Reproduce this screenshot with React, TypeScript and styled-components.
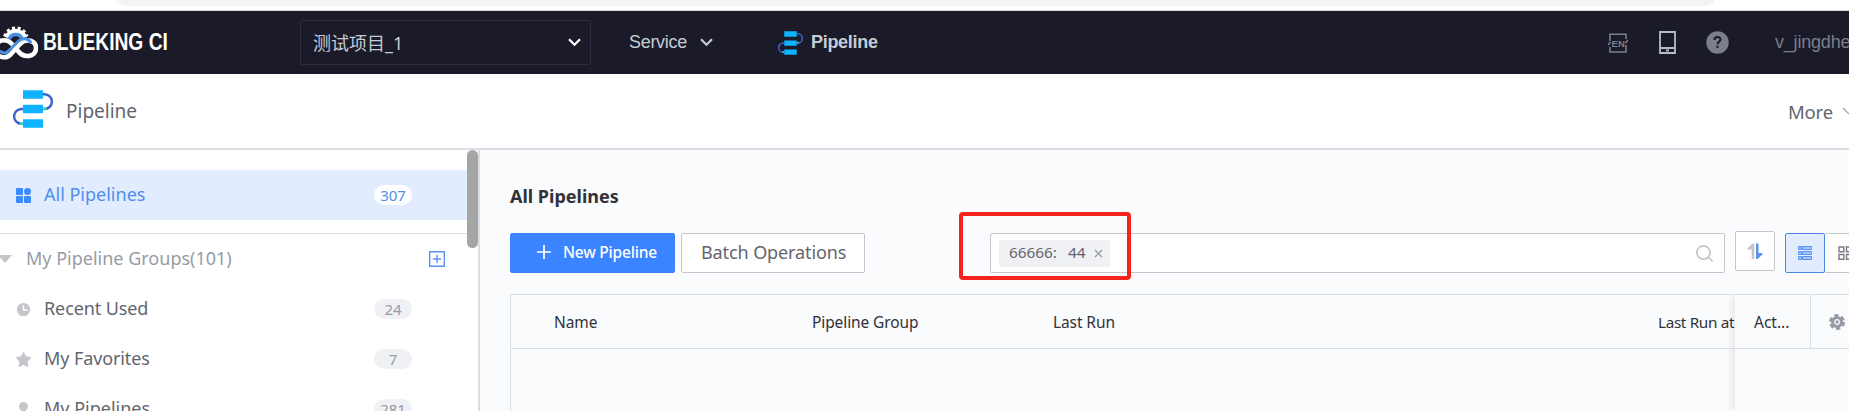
import React from "react";
import styled, { createGlobalStyle, css } from "styled-components";

const Global = createGlobalStyle`
  * { box-sizing: border-box; }
  html, body { margin: 0; padding: 0; overflow: hidden; }
  body { width: 1849px; height: 411px; background: #fff; font-family: "Noto Sans", "Noto Sans CJK SC", sans-serif; color: #63656e; }
  svg { display: block; flex: none; }
`;

const Page = styled.div`
  width: 1849px;
  height: 411px;
  overflow: hidden;
  display: flex;
  flex-direction: column;
`;

const BrowserEdge = styled.div`
  height: 11px;
  flex: none;
  border-bottom: 1px solid #d8dade;
  padding: 0 134px 0 116px;
`;

const AddressBar = styled.div`
  height: 6px;
  background: #f1f3f4;
  border-radius: 0 0 16px 16px / 0 0 6px 6px;
`;

const Text = styled.span<{ $size: number; $ls?: number; $color?: string; $bold?: boolean; $weight?: number; $arial?: boolean; $up?: number }>`
  white-space: nowrap;
  flex: none;
  font-size: ${(p) => p.$size}px;
  letter-spacing: ${(p) => p.$ls ?? 0}px;
  color: ${(p) => p.$color ?? "#63656e"};
  font-weight: ${(p) => p.$weight ?? (p.$bold ? 700 : 400)};
  margin-bottom: ${(p) => (p.$up ?? 0) * 2}px;
  ${(p) => p.$arial && css`font-family: "Liberation Sans", "Noto Sans CJK SC", sans-serif;`}
`;

const BrandName = styled.span`
  font: 700 23px "Liberation Sans", sans-serif;
  color: #fff;
  white-space: nowrap;
  transform: scaleX(0.835);
  transform-origin: left center;
`;

const Nav = styled.header`
  height: 63px;
  flex: none;
  background: #1b1a28;
  display: flex;
  align-items: center;
  overflow: hidden;
`;

const Brand = styled.div`
  width: 300px;
  flex: none;
  display: flex;
  align-items: center;
  gap: 5px;
`;

const ProjectSelect = styled.div`
  width: 291px;
  height: 45px;
  flex: none;
  border: 1px solid #2c2b40;
  border-radius: 2px;
  display: flex;
  align-items: center;
  justify-content: space-between;
  padding: 0 9px 0 12px;
`;

const NavService = styled.div`
  width: 187px;
  flex: none;
  padding-left: 38px;
  display: flex;
  align-items: center;
  gap: 13px;
`;

const NavCurrent = styled.div`
  flex: 1;
  display: flex;
  align-items: center;
  gap: 8px;
`;

const NavTools = styled.div`
  width: 241px;
  flex: none;
  display: flex;
  align-items: center;
`;

const ToolSlot = styled.div<{ $w: number }>`
  width: ${(p) => p.$w}px;
  flex: none;
`;

const SubHeader = styled.div`
  height: 76px;
  flex: none;
  border-bottom: 2px solid #dcdee5;
  display: flex;
  align-items: center;
  padding-left: 13px;
  overflow: hidden;
`;

const SubTitle = styled.div`
  flex: 1;
  display: flex;
  align-items: center;
  gap: 13px;
`;

const ServiceMark = styled.div`
  margin-bottom: 4px;
`;

const MoreMenu = styled.div`
  width: 61px;
  flex: none;
  display: flex;
  align-items: center;
  gap: 9px;
`;

const Body = styled.div`
  flex: 1;
  min-height: 0;
  display: flex;
`;

const Aside = styled.aside`
  width: 480px;
  flex: none;
  border-right: 2px solid #dcdee5;
  display: flex;
  background: #fff;
  overflow: hidden;
`;

const AsideList = styled.div`
  flex: 1;
  padding-top: 20px;
`;

const ScrollThumb = styled.div`
  width: 11px;
  height: 98px;
  flex: none;
  border-radius: 6px;
  background: #a5a5a5;
`;

const Item = styled.div<{ $active?: boolean }>`
  height: 50px;
  display: flex;
  align-items: center;
  padding: 0 55px 0 16px;
  background: ${(p) => (p.$active ? "#e1ecff" : "transparent")};
`;

const ItemIcon = styled.div`
  width: 28px;
  flex: none;
`;

const ItemName = styled.div`
  flex: 1;
  display: flex;
`;

const Badge = styled.div<{ $active?: boolean }>`
  width: 38px;
  height: 20px;
  border-radius: 10px;
  background: ${(p) => (p.$active ? "#fff" : "#f0f1f5")};
  display: flex;
  align-items: center;
  justify-content: center;
`;

const GroupRow = styled.div`
  margin-top: 13px;
  border-top: 1px solid #dcdee5;
  height: 51px;
  display: flex;
  align-items: center;
  justify-content: space-between;
  padding-right: 22px;
`;

const GroupLabel = styled.div`
  display: flex;
  align-items: center;
  gap: 14px;
`;

const Main = styled.main`
  flex: 1;
  min-width: 0;
  background: #fafbfd;
  padding: 30px 0 0 30px;
  display: flex;
  flex-direction: column;
`;

const Title = styled.div`
  height: 32px;
  flex: none;
  display: flex;
  align-items: center;
`;

const Toolbar = styled.div`
  margin-top: 21px;
  height: 40px;
  flex: none;
  display: flex;
`;

const Button = styled.div<{ $primary?: boolean; $w: number }>`
  width: ${(p) => p.$w}px;
  height: 40px;
  flex: none;
  border-radius: 2px;
  border: 1px solid ${(p) => (p.$primary ? "#3a84ff" : "#c4c6cc")};
  background: ${(p) => (p.$primary ? "#3a84ff" : "#fff")};
  display: flex;
  align-items: center;
  gap: 12px;
  padding-left: ${(p) => (p.$primary ? 26 : 19)}px;
  margin-right: 6px;
`;

const PlusMark = styled.div`
  margin-bottom: 3px;
`;

const Search = styled.div`
  position: relative;
  width: 735px;
  height: 40px;
  flex: none;
  margin-left: 119px;
  border: 1px solid #c4c6cc;
  border-radius: 2px;
  background: #fff;
  display: flex;
  align-items: center;
  justify-content: space-between;
  padding: 0 11px 0 8px;
`;

const Tag = styled.div`
  width: 111px;
  height: 27px;
  border-radius: 2px;
  background: #f0f1f5;
  display: flex;
  align-items: center;
  padding-left: 10px;
`;

const Highlight = styled.div`
  position: absolute;
  left: -32px;
  top: -22px;
  width: 172px;
  height: 68px;
  border: 4px solid #f5231b;
  border-radius: 4px;
`;

const IconButton = styled.div<{ $variant?: "sort" | "on" | "off" }>`
  width: 40px;
  height: 40px;
  flex: none;
  display: flex;
  align-items: center;
  justify-content: center;
  border: 1px solid ${(p) => (p.$variant === "on" ? "#4a86e0" : "#c4c6cc")};
  border-radius: ${(p) => (p.$variant === "off" ? 0 : 2)}px;
  background: ${(p) => (p.$variant === "on" ? "#e1ecff" : "#fff")};
  ${(p) => p.$variant === "sort" && css`margin: -2px 10px 0 10px;`}
  ${(p) => p.$variant === "off" && css`border-left: 0;`}
`;

const Table = styled.div`
  margin-top: 21px;
  flex: 1;
  border: 1px solid #dcdee5;
  border-width: 1px 0 0 1px;
  border-radius: 2px 0 0 0;
  display: flex;
  min-width: 0;
`;

const Scrollable = styled.div`
  flex: 1;
  min-width: 0;
  overflow: hidden;
`;

const HeadRow = styled.div`
  height: 54px;
  border-bottom: 1px solid #dcdee5;
  display: flex;
  align-items: center;
`;

const HeadCell = styled.div<{ $w: number; $pad?: number }>`
  width: ${(p) => p.$w}px;
  padding-left: ${(p) => p.$pad ?? 0}px;
  flex: none;
  display: flex;
`;

const FixedColumns = styled.div`
  width: 114px;
  flex: none;
  background: #fafbfd;
  box-shadow: 0 0 10px rgba(0, 0, 0, 0.14);
  clip-path: inset(0 0 0 -20px);
`;

const ActionCell = styled.div`
  width: 76px;
  height: 53px;
  flex: none;
  border-right: 1px solid #dcdee5;
  padding-left: 19px;
  display: flex;
  align-items: center;
`;

const SettingCell = styled.div`
  padding-left: 18px;
`;

const PipelineIcon = ({ w, h }: { w: number; h: number }) => (
  <svg width={w} height={h} viewBox="0 0 40 38" fill="none">
    <path d="M30 4.200h1.500a7.300 7.300 0 0 1 0 14.800H30M10 19H8.500a7.300 7.300 0 0 0 0 14.800H10" stroke="#3c62cf" strokeWidth="2.400" />
    <path d="M30 19l3.500-.6M10 33.800l-3-.6" stroke="#3adfc4" strokeWidth="2.400" />
    <path d="M10 .3h20v8.500H10zM10 14.800h20v8.500H10zM10 29.200h20v8.500H10z" fill="#0eb4ff" />
  </svg>
);

const Chevron = ({ color }: { color: string }) => (
  <svg width="13" height="9" viewBox="0 0 13 9" fill="none" stroke={color} strokeWidth="2.300">
    <path d="M1 1.300l5.500 5.400L12 1.300" />
  </svg>
);

const Logo = () => (
  <svg width="38" height="36" viewBox="0 0 38 36" fill="none">
    <path d="M6.500 12.500a9.800 9.800 0 0 1 18.500 0" stroke="#fff" strokeWidth="4.500" />
    <path d="M4.700 11.500a11.500 11.500 0 0 1 22.200 0" stroke="#fff" strokeWidth="3.200" strokeDasharray="3 2.600" />
    <path d="M9.500 14c1.500-6 11-6 12.500 0" stroke="#4a90e2" strokeWidth="3.600" />
    <path d="M-4 19C1 13.500 8 14.500 12 19l6 7c6 8 18 6 18-3 0-8-10-10-15.500-4.500L11 29c-4 5-11 4-15-1" stroke="#fff" strokeWidth="4.600" />
    <path d="M0 25.500c2.500 3.500 6.500 3 8.500.5L18.500 16c4-3.500 10-3 12.500 2" stroke="#4a90e2" strokeWidth="3" />
  </svg>
);

const EnLabel = styled.text`
  font: 700 9.500px "Liberation Sans", sans-serif;
  fill: #7b7e8c;
`;

const navGray = "#7b7e8c";

const App = () => (
  <Page>
    <Global />
    <BrowserEdge>
      <AddressBar />
    </BrowserEdge>
    <Nav>
      <Brand>
        <Logo />
        <BrandName>BLUEKING CI</BrandName>
      </Brand>
      <ProjectSelect>
        <Text $size={18} $color="#c3cdd7" $up={1}>测试项目_1</Text>
        <Chevron color="#fff" />
      </ProjectSelect>
      <NavService>
        <Text $size={18} $ls={-0.3} $color="#c3cdd7" $arial>Service</Text>
        <Chevron color="#c3cdd7" />
      </NavService>
      <NavCurrent>
        <PipelineIcon w={25} h={24} />
        <Text $size={18} $ls={-0.3} $color="#c3cdd7" $bold $arial>Pipeline</Text>
      </NavCurrent>
      <NavTools>
        <ToolSlot $w={51}>
          <svg width="20" height="20" viewBox="0 0 20 20" fill="none" stroke={navGray} strokeWidth="1.600">
            <path d="M2 8V1.200h16V6M18 12v7H2v-5M0 12l2.500-3M20 7l-2.500 3" />
            <EnLabel x="3.600" y="13.500" stroke="none">EN</EnLabel>
          </svg>
        </ToolSlot>
        <ToolSlot $w={47}>
          <svg width="17" height="23" viewBox="0 0 17 23" fill="none" stroke="#b4bdc9" strokeWidth="1.800">
            <path d="M1 1h15v21H1zM1 17h15M7 19.500h3" />
          </svg>
        </ToolSlot>
        <ToolSlot $w={69}>
          <svg width="23" height="23" viewBox="0 0 23 23" fill="none">
            <circle cx="11.500" cy="11.500" r="11.200" fill={navGray} />
            <path d="M8.500 9c0-4 6-4 6-.5 0 2.200-3 2-3 4.700M11.500 14.800v2.200" stroke="#1b1a28" strokeWidth="2" />
          </svg>
        </ToolSlot>
        <Text $size={18} $ls={-0.2} $color={navGray} $arial>v_jingdhe</Text>
      </NavTools>
    </Nav>
    <SubHeader>
      <SubTitle>
        <ServiceMark><PipelineIcon w={40} h={38} /></ServiceMark>
        <Text $size={19}>Pipeline</Text>
      </SubTitle>
      <MoreMenu>
        <Text $size={18.500} $ls={-0.2}>More</Text>
        <svg width="14" height="9" viewBox="0 0 14 9" fill="none" stroke="#979ba5" strokeWidth="1.200">
          <path d="M1 1l6 6 6-6" />
        </svg>
      </MoreMenu>
    </SubHeader>
    <Body>
      <Aside>
        <AsideList>
          <Item $active>
            <ItemIcon>
              <svg width="15" height="15" viewBox="0 0 15 15" fill="#3a8cff">
                <rect width="7" height="7" rx="1" />
                <circle cx="11.500" cy="3.500" r="3.500" />
                <rect y="8" width="7" height="7" rx="1" />
                <rect x="8" y="8" width="7" height="7" rx="1" />
              </svg>
            </ItemIcon>
            <ItemName><Text $size={18} $up={1} $color="#4f8fec">All Pipelines</Text></ItemName>
            <Badge $active><Text $size={15} $color="#4f8fec">307</Text></Badge>
          </Item>
          <GroupRow>
            <GroupLabel>
              <svg width="12" height="8" viewBox="0 0 12 8"><path d="M-2 0h14L5 8z" fill="#c4c6cc" /></svg>
              <Text $size={18} $up={1} $color="#979ba5">My Pipeline Groups(101)</Text>
            </GroupLabel>
            <svg width="16" height="16" viewBox="0 0 16 16" fill="none" stroke="#5b93ee" strokeWidth="1.400">
              <path d="M.7.7h14.600v14.600H.7zM4 8h8M8 4v8" />
            </svg>
          </GroupRow>
          <Item>
            <ItemIcon>
              <svg width="15" height="15" viewBox="0 0 15 15"><circle cx="7.500" cy="7.500" r="6.600" fill="#c4c6cc" /><path d="M7.500 3v5h4" fill="none" stroke="#fff" strokeWidth="1.400" /></svg>
            </ItemIcon>
            <ItemName><Text $size={18} $ls={-0.1} $up={1}>Recent Used</Text></ItemName>
            <Badge><Text $size={15} $color="#979ba5">24</Text></Badge>
          </Item>
          <Item>
            <ItemIcon>
              <svg width="15" height="15" viewBox="0 0 15 15"><path d="M7.500 0l2.400 4.600 5.100.9-3.600 3.900.8 5.600-4.700-2.500L2.800 15l.8-5.600L0 5.500l5.100-.9z" fill="#c4c6cc" stroke="#c4c6cc" strokeWidth=".6" /></svg>
            </ItemIcon>
            <ItemName><Text $size={18} $ls={-0.1} $up={1}>My Favorites</Text></ItemName>
            <Badge><Text $size={15} $color="#979ba5">7</Text></Badge>
          </Item>
          <Item>
            <ItemIcon>
              <svg width="15" height="15" viewBox="0 0 15 15" fill="#c4c6cc"><path d="M7.500 0a4.500 4.500 0 0 1 2.500 8.200v1.300l4.500 2V15H.5v-3.500l4.500-2V8.200A4.500 4.500 0 0 1 7.500 0z" /></svg>
            </ItemIcon>
            <ItemName><Text $size={18} $up={1}>My Pipelines</Text></ItemName>
            <Badge><Text $size={15} $color="#979ba5">281</Text></Badge>
          </Item>
        </AsideList>
        <ScrollThumb />
      </Aside>
      <Main>
        <Title><Text $size={18} $color="#313238" $bold>All Pipelines</Text></Title>
        <Toolbar>
          <Button $primary $w={165}>
            <PlusMark>
              <svg width="14" height="14" viewBox="0 0 14 14" stroke="#fff" strokeWidth="1.700"><path d="M0 7h14M7 0v14" /></svg>
            </PlusMark>
            <Text $size={15.500} $ls={-0.2} $up={1} $color="#fff" $weight={500}>New Pipeline</Text>
          </Button>
          <Button $w={184}><Text $size={18} $ls={-0.1} $up={1}>Batch Operations</Text></Button>
          <Search>
            <Tag>
              <HeadCell $w={59}><Text $size={15.300} $up={1}>66666:</Text></HeadCell>
              <HeadCell $w={26}><Text $size={15.300} $up={1}>44</Text></HeadCell>
              <svg width="9" height="9" viewBox="0 0 9 9" stroke="#979ba5" strokeWidth="1.300"><path d="M1 1l7 7M8 1L1 8" /></svg>
            </Tag>
            <svg width="17" height="17" viewBox="0 0 17 17" fill="none" stroke="#c4c6cc" strokeWidth="1.700"><circle cx="7.500" cy="7.500" r="6.600" /><path d="M12 12l4.500 4.500" /></svg>
            <Highlight />
          </Search>
          <IconButton $variant="sort">
            <svg width="16" height="17" viewBox="0 0 16 17">
              <path d="M7.300.5v15.500H4.700V6.500H.5v-1.300L5.600.5z" fill="#c4c6cc" />
              <path d="M9 16V.5h2.500v9.500h4v1.500L10.500 16z" fill="#5b93ee" />
            </svg>
          </IconButton>
          <IconButton $variant="on">
            <svg width="14" height="14" viewBox="0 0 14 14" fill="#a3c5fd" stroke="#5b93ee">
              <path d="M.5.5h3v3h-3zM4.500.5h9v3h-9zM.5 5.500h3v3h-3zM4.500 5.500h9v3h-9zM.5 10.500h3v3h-3zM4.500 10.500h9v3h-9z" />
            </svg>
          </IconButton>
          <IconButton $variant="off">
            <svg width="14" height="14" viewBox="0 0 14 14" fill="none" stroke="#777a84" strokeWidth="1.400">
              <path d="M1 1h4.800v4.800H1zM8.500 1h4.800v4.800H8.500zM1 8.500h4.800v4.800H1zM8.500 8.500h4.800v4.800H8.500z" />
            </svg>
          </IconButton>
        </Toolbar>
        <Table>
          <Scrollable>
            <HeadRow>
              <HeadCell $w={301} $pad={43}><Text $size={15.500} $ls={-0.1} $color="#313238">Name</Text></HeadCell>
              <HeadCell $w={241}><Text $size={15.500} $ls={-0.1} $color="#313238">Pipeline Group</Text></HeadCell>
              <HeadCell $w={605}><Text $size={15.500} $ls={-0.1} $color="#313238">Last Run</Text></HeadCell>
              <HeadCell $w={90}><Text $size={15.300} $ls={-0.35} $color="#313238">Last Run at</Text></HeadCell>
            </HeadRow>
          </Scrollable>
          <FixedColumns>
            <HeadRow>
              <ActionCell><Text $size={15.500} $color="#313238">Act...</Text></ActionCell>
              <SettingCell>
                <svg width="16" height="16" viewBox="0 0 16 16">
                  <circle cx="8" cy="8" r="6" fill="#979ba5" />
                  <circle cx="8" cy="8" r="6.300" fill="none" stroke="#979ba5" strokeWidth="3.400" strokeDasharray="4 2.600" />
                  <circle cx="8" cy="8" r="2.300" fill="none" stroke="#fafbfd" strokeWidth="1.300" />
                </svg>
              </SettingCell>
            </HeadRow>
          </FixedColumns>
        </Table>
      </Main>
    </Body>
  </Page>
);

export default App;
